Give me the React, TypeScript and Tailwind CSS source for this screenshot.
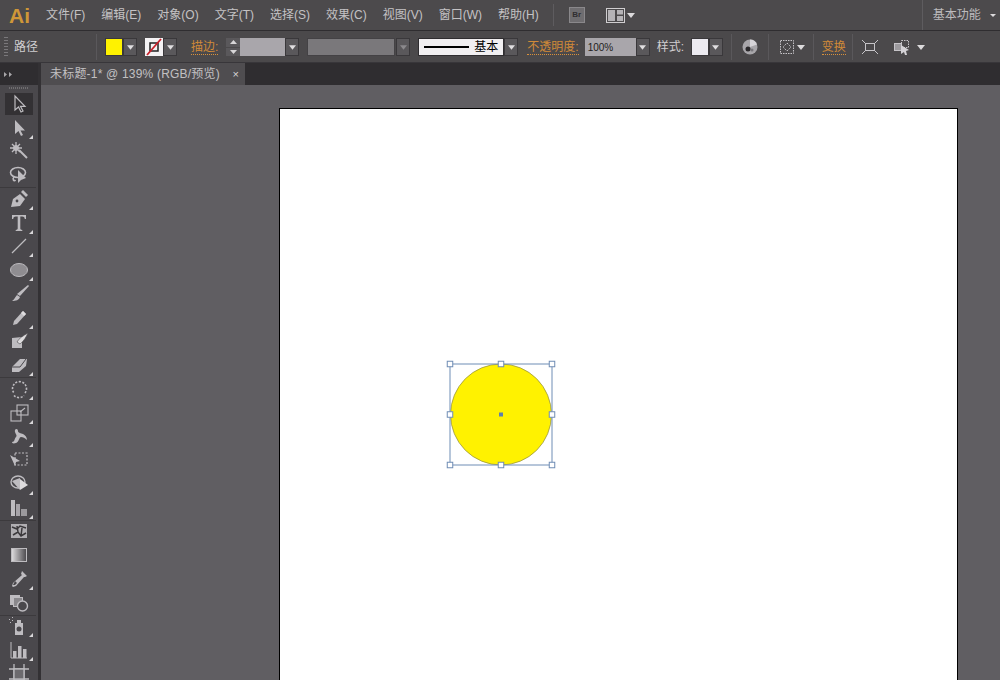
import type { ReactNode } from "react";

const menus = ["文件(F)", "编辑(E)", "对象(O)", "文字(T)", "选择(S)", "效果(C)", "视图(V)", "窗口(W)", "帮助(H)"];

function Caret({ className = "" }: { className?: string }) {
  return (
    <svg width="8" height="5" viewBox="0 0 8 5" className={className}>
      <path d="M0 0h8L4 5z" fill="#dcdadc" />
    </svg>
  );
}

function ArrowButton({ dim = false }: { dim?: boolean }) {
  return (
    <div className="flex h-[18px] w-[14px] items-center justify-center border border-[#3a383b] bg-[#5a585b]">
      <svg width="7" height="5" viewBox="0 0 8 5">
        <path d="M0 0h8L4 5z" fill={dim ? "#8b898c" : "#e0dee0"} />
      </svg>
    </div>
  );
}

function Sep({ ml, mr }: { ml: number; mr: number }) {
  return <div className="h-[26px] w-px shrink-0 bg-[#5a585b]" style={{ marginLeft: ml, marginRight: mr }} />;
}

const stroke = "#bebcc0";

const tools: { icon: ReactNode; more?: boolean; active?: boolean; sepAfter?: boolean }[] = [
  { active: true, icon: <path d="M6 2v14l3.500-3 2.500 5 2-1-2.500-4.600H16z" fill="none" stroke={stroke} strokeWidth="1.200" /> },
  { more: true, icon: <path d="M6 2v14l3.500-3 2.500 5 2-1-2.500-4.600H16z" fill={stroke} /> },
  { icon: <g stroke={stroke} fill="none"><path d="M10 9l8 8" strokeWidth="2" /><path d="M7 1v12M1 7h12M3 3l8 8M11 3l-8 8" strokeWidth="1.300" /><circle cx="7" cy="7" r="2.500" fill={stroke} /></g> },
  { sepAfter: true, icon: <g stroke={stroke} fill="none" strokeWidth="1.600"><ellipse cx="9" cy="7.500" rx="7.500" ry="5" /><path d="M5 12c-2 2 0 5 1.500 3" /><path d="M9 5v13l3-3 5-2z" fill={stroke} stroke="none" /></g> },
  { more: true, icon: <g fill={stroke}><path d="M2 18l2-8 7-5 5 5-5 7z" /><path d="M12 3l2-2 5 5-2 2z" /><circle cx="8" cy="12" r="1.400" fill="#4a484c" /></g> },
  { more: true, icon: <path d="M3 2h14v4h-1.200c-.3-1.600-1-2.400-2.600-2.400h-1.900v12c0 1 .6 1.200 2 1.300V18H6.700v-1.100c1.400-.1 2-.3 2-1.300v-12H6.800C5.200 3.600 4.500 4.400 4.200 6H3z" fill={stroke} /> },
  { more: true, icon: <path d="M3 17L17 3" stroke={stroke} strokeWidth="1.300" /> },
  { more: true, icon: <ellipse cx="10" cy="10" rx="8.500" ry="6.500" fill="#8f8d91" stroke={stroke} /> },
  { icon: <g fill={stroke}><path d="M19 1l1 1-9 10-3-2z" /><path d="M8 11l3 2c-1 3-4 4-8 4 2-1 3-4 5-6z" /></g> },
  { more: true, icon: <g fill={stroke}><path d="M14 3l3 3-9 10-4 1 1-4z" /><path d="M14 3l3 3-2 2-3-3z" fill="#dedcde" /></g> },
  { icon: <g fill={stroke}><path d="M3 7l10-1v11H3z" /><path d="M8 11c2-4 6-6 11-9-2 4-4 8-8 11z" fill="#dedcde" stroke="#4a484c" strokeWidth=".6" /></g> },
  { more: true, sepAfter: true, icon: <g><path d="M3 12l8-8h7l-1 7-7 6H3z" fill={stroke} /><path d="M3 12h8l6-8" fill="none" stroke="#4a484c" /></g> },
  { more: true, icon: <g fill="none" stroke={stroke} strokeWidth="1.600"><path d="M16 14a7 7 0 1 0-11 0" strokeDasharray="2 1.500" /><path d="M5 16.500a7 7 0 0 0 10 0" strokeDasharray="2 1.500" /></g> },
  { more: true, icon: <g fill="none" stroke={stroke} strokeWidth="1.100"><rect x="8" y="2" width="11" height="10" /><rect x="2" y="8" width="10" height="10" /><path d="M11 9l5-4" /></g> },
  { more: true, icon: <path d="M3 16c3 0 2-3 4-5S5 7 6 4c1-2 3-1 3 1s3 2 5 3 4 3 4 6c-2-2-4-3-6-3s-2 5-5 6-4 0-4-1z" fill={stroke} /> },
  { icon: <g><path d="M1 5l10 6-4 1-1 4z" fill={stroke} /><rect x="6" y="3" width="12" height="12" fill="none" stroke={stroke} strokeDasharray="2 1.500" strokeWidth="1.200" /></g> },
  { more: true, icon: <g><ellipse cx="9" cy="8" rx="7" ry="6" fill="none" stroke={stroke} strokeWidth="1.400" /><path d="M3 7l8-3v12z" fill={stroke} /><path d="M11 5l8 6-8 5z" fill="#dedcde" /></g> },
  { more: true, sepAfter: true, icon: <g fill={stroke}><rect x="2" y="2" width="4" height="16" /><rect x="7" y="6" width="4" height="12" opacity=".8" /><rect x="12" y="11" width="6" height="7" opacity=".7" /></g> },
  { icon: <g><rect x="2" y="3" width="16" height="14" fill="#b0aeb2" /><path d="M3 6l5 2 3-3 6 2M4 14l5-3 3 4 5-3M8 5l1 6M13 7l-1 8" stroke="#3a383b" strokeWidth="1.500" fill="none" /></g> },
  { icon: <g><defs><linearGradient id="grad"><stop offset="0" stopColor="#e0dee0" /><stop offset="1" stopColor="#4a484c" /></linearGradient></defs><rect x="2.500" y="3.500" width="15" height="13" fill="url(#grad)" stroke={stroke} /></g> },
  { more: true, icon: <g fill={stroke}><path d="M13 2l5 5-2 1-1 0-8 9-3 1-1-1 1-3 9-8-1-1z" /><path d="M6 12l2 2-2 2-2 0z" fill="#4a484c" /></g> },
  { sepAfter: true, icon: <g fill="none" stroke={stroke}><rect x="1.500" y="2.500" width="9" height="9" fill={stroke} /><rect x="4.500" y="4.500" width="9" height="9" fill="#8a888c" /><circle cx="13.500" cy="13" r="5" strokeWidth="1.400" fill="#4a484c" /></g> },
  { more: true, icon: <g fill={stroke}><path d="M6 7h8v12H6zM8 4h4v3H8z" /><circle cx="10" cy="13" r="2.500" fill="#4a484c" /><path d="M0 3h1v1H0zM3 1h1v1H3zM3 4h1v1H3zM1 6h1v1H1z" /></g> },
  { more: true, icon: <g><path d="M2 2v16h16" fill="none" stroke={stroke} /><rect x="4" y="11" width="3.500" height="7" fill={stroke} /><rect x="9" y="6" width="3.500" height="12" fill={stroke} /><rect x="14" y="9" width="3.500" height="9" fill={stroke} /></g> },
  { icon: <g fill="none" stroke={stroke} strokeWidth="1.300"><path d="M5 0v20M15 0v20M0 5h20M0 15h20" /><rect x="5" y="5" width="10" height="10" fill="#6c6a6e" /></g> },
];

function Tool({ icon, more, active, sepAfter }: (typeof tools)[number]) {
  return (
    <div className="relative flex h-[23.75px] w-[26px] shrink-0 items-center justify-center">
      <div className={`flex h-[22px] w-[28px] shrink-0 items-center justify-center ${active ? "bg-[#333134]" : ""}`}>
        <svg width="20" height="20" viewBox="0 0 20 20">
          {icon}
        </svg>
      </div>
      {more && (
        <svg width="4" height="4" viewBox="0 0 4 4" className="absolute bottom-[1px] right-[-1px]">
          <path d="M4 0v4H0z" fill="#d8d6d8" />
        </svg>
      )}
      {sepAfter && <div className="absolute bottom-[-1px] left-[-6px] h-px w-[36px] bg-[#3c3a3d]" />}
    </div>
  );
}

function MenuBar() {
  return (
    <div className="flex h-[31px] shrink-0 items-center border-b border-[#2f2d30] bg-[#4c4a4c] text-[12px] text-[#c4c2c4]">
      <span className="ml-[9px] w-[37px] text-[21px] leading-none font-bold text-[#cf9738] [font-family:'Liberation_Sans',sans-serif]">Ai</span>
      <div className="flex gap-[16px]">
        {menus.map((m) => (
          <span key={m}>{m}</span>
        ))}
      </div>
      <div className="ml-[14px] h-[22px] w-px bg-[#5e5c5f]" />
      <div className="ml-[15px] flex h-[16px] w-[16px] items-center justify-center border border-[#8a888b] bg-[#6f6d70] text-[8px] font-bold text-[#2f2d30]">Br</div>
      <svg width="19" height="15" viewBox="0 0 19 15" className="ml-[21px]">
        <rect x=".5" y=".5" width="18" height="14" fill="#4c4a4c" stroke="#d0ced0" />
        <rect x="2" y="2" width="7" height="11" fill="#b5b3b6" />
        <rect x="11" y="2" width="6" height="4.500" fill="#b5b3b6" />
        <rect x="11" y="8" width="6" height="5" fill="#b5b3b6" />
      </svg>
      <Caret className="ml-[2px]" />
      <div className="ml-[287px] h-[30px] w-px bg-[#5e5c5f]" />
      <span className="ml-[10px] text-[#bdbbbd]">基本功能</span>
      <svg width="6" height="3" viewBox="0 0 6 3" className="ml-[9px]">
        <path d="M0 0h6L3 3z" fill="#dcdadc" />
      </svg>
    </div>
  );
}

function ControlBar() {
  return (
    <div className="flex h-[32px] shrink-0 items-center border-b border-[#38363a] bg-[#4b494b] pt-px text-[12px] text-[#d0ced0]">
      <div className="ml-[4px] h-[20px] w-[4px] bg-[repeating-linear-gradient(#7a787b_0_1px,transparent_1px_3px)]" />
      <span className="ml-[6px] w-[82px]">路径</span>
      <div className="mr-[8px] h-[26px] w-px bg-[#5a585b]" />
      <div className="flex">
        <div className="h-[18px] w-[18px] border border-[#3a383b] bg-[#fff200]" />
        <ArrowButton />
      </div>
      <div className="ml-[8px] flex">
        <svg width="18" height="18" viewBox="0 0 18 18">
          <rect width="18" height="18" fill="#f4f2f4" />
          <rect x="5" y="5" width="8" height="8" fill="none" stroke="#222" strokeWidth="1.500" />
          <path d="M2 17L16 1" stroke="#c8202a" strokeWidth="1.800" />
        </svg>
        <ArrowButton />
      </div>
      <span className="ml-[14px] border-b border-dotted border-[#d9913b] leading-[14px] text-[#d08a38]">描边:</span>
      <div className="ml-[8px] flex h-[18px] w-[14px] flex-col gap-px">
        <div className="flex flex-1 items-center justify-center bg-[#5a585b]">
          <svg width="7" height="4" viewBox="0 0 7 4"><path d="M0 4h7L3.500 0z" fill="#d8d6d8" /></svg>
        </div>
        <div className="flex flex-1 items-center justify-center bg-[#5a585b]">
          <svg width="7" height="4" viewBox="0 0 7 4"><path d="M0 0h7L3.500 4z" fill="#d8d6d8" /></svg>
        </div>
      </div>
      <div className="h-[18px] w-[45px] bg-[#a9a6ab]" />
      <ArrowButton />
      <div className="ml-[8px] h-[18px] w-[88px] border border-[#444245] bg-[#7a787b]" />
      <div className="ml-[1px]">
        <ArrowButton dim />
      </div>
      <div className="ml-[8px] flex h-[18px] w-[86px] items-center border border-[#2f2d30] bg-[#f1eff1] text-black">
        <div className="ml-[5px] h-[2px] w-[45px] bg-black" />
        <span className="ml-[5px]">基本</span>
      </div>
      <ArrowButton />
      <span className="ml-[9px] border-b border-dotted border-[#d9913b] leading-[14px] text-[#d08a38]">不透明度:</span>
      <div className="ml-[6px] flex h-[18px] w-[51px] items-center bg-[#a9a6ab] pl-[3px] text-[10px] text-[#1f1d20]">100%</div>
      <ArrowButton />
      <span className="ml-[7px] w-[34px]">样式:</span>
      <div className="h-[18px] w-[18px] border border-[#3a383b] bg-[#eceaf0]" />
      <ArrowButton />
      <Sep ml={8} mr={10} />
      <svg width="16" height="16" viewBox="0 0 16 16" className="mr-[10px]">
        <circle cx="8" cy="8" r="7.500" fill="#a8a6aa" />
        <path d="M8 .5a7.500 7.500 0 0 1 7 5L8 8z" fill="#d6d4d8" />
        <circle cx="6" cy="10" r="2.500" fill="#2a282b" />
        <circle cx="10" cy="11" r="1.500" fill="#77757a" />
      </svg>
      <Sep ml={0} mr={11} />
      <svg width="14" height="14" viewBox="0 0 14 14">
        <rect x=".5" y=".5" width="13" height="13" fill="none" stroke="#c6c4c8" strokeDasharray="1.500 1" />
        <path d="M7 3l4 4-4 4-4-4z" fill="none" stroke="#c6c4c8" strokeDasharray="1.500 1" />
      </svg>
      <Caret className="ml-[3px]" />
      <Sep ml={8} mr={8} />
      <span className="border-b border-dotted border-[#d9913b] leading-[14px] text-[#d08a38]">变换</span>
      <Sep ml={6} mr={9} />
      <svg width="16" height="14" viewBox="0 0 16 14">
        <rect x="3.500" y="3.500" width="9" height="7" fill="none" stroke="#c6c4c8" />
        <path d="M0 0l3 3M16 0l-3 3M0 14l3-3M16 14l-3-3" stroke="#c6c4c8" />
      </svg>
      <svg width="16" height="15" viewBox="0 0 16 15" className="ml-[16px]">
        <rect x=".5" y="3.500" width="7" height="7" fill="#9c9a9e" stroke="#c6c4c8" />
        <rect x="7.500" y=".5" width="7" height="7" fill="none" stroke="#c6c4c8" strokeDasharray="1.500 1" />
        <path d="M7 5l8 5-3 1 1 4-2 0-1-3-3 2z" fill="#d4d2d6" />
      </svg>
      <Caret className="ml-[7px]" />
    </div>
  );
}

function SideBar() {
  return (
    <aside className="flex w-[41px] shrink-0 flex-col border-r-[3px] border-[#333134] bg-[#4a484c]">
      <div className="flex h-[22px] shrink-0 items-center bg-[#2f2d30] pl-[4px] text-[8px] leading-none text-[#a8a6a9]">
        <svg width="9" height="5" viewBox="0 0 9 5">
          <path d="M0 0l3 2.500L0 5zM5 0l3 2.500L5 5z" fill="#a8a6a9" />
        </svg>
      </div>
      <div className="mx-auto mt-[2px] h-[2px] w-[20px] shrink-0 bg-[repeating-linear-gradient(90deg,#706e71_0_1px,transparent_1px_2px)]" />
      <div className="mt-[3px] flex flex-col items-center">
        {tools.map((t, i) => (
          <Tool key={i} {...t} />
        ))}
      </div>
    </aside>
  );
}

function Selection() {
  const handles = [
    [450, 364],
    [501, 364],
    [552, 364],
    [450, 414.5],
    [552, 414.5],
    [450, 465],
    [501, 465],
    [552, 465],
  ];
  return (
    <svg width="120" height="120" viewBox="440 354 120 120" className="absolute left-[160px] top-[245px]">
      <circle cx="501" cy="414.500" r="50.500" fill="#fff200" stroke="#8d8a45" strokeWidth=".7" />
      <rect x="450" y="364" width="102" height="101" fill="none" stroke="#6f8db5" />
      {handles.map(([x, y]) => (
        <rect key={`${x}-${y}`} x={x - 2.750} y={y - 2.750} width="5.500" height="5.500" fill="#fff" stroke="#6f8db5" />
      ))}
      <rect x="499" y="412.500" width="4" height="4" fill="#5f80ad" />
    </svg>
  );
}

export default function App() {
  return (
    <div className="flex h-[680px] w-[1000px] flex-col overflow-hidden bg-[#605e62] [font-family:'Liberation_Sans','Noto_Sans_CJK_SC',sans-serif]">
      <MenuBar />
      <ControlBar />
      <div className="flex min-h-0 flex-1">
        <SideBar />
        <main className="flex min-w-0 flex-1 flex-col">
          <div className="flex h-[22px] shrink-0 bg-[#2f2d30]">
            <div className="flex w-[204px] items-center bg-[#4f4d50] pl-[9px] text-[12px] tracking-[0.2px] text-[#c2c0c2]">
              <span>未标题-1* @ 139% (RGB/预览)</span>
              <span className="ml-auto mr-[6px] text-[11px] leading-none text-[#d6d4d6]">×</span>
            </div>
          </div>
          <div className="min-h-0 flex-1 overflow-hidden pl-[238px] pt-[23px]">
            <div className="relative h-[600px] w-[679px] border border-black bg-white">
              <Selection />
            </div>
          </div>
        </main>
      </div>
    </div>
  );
}
